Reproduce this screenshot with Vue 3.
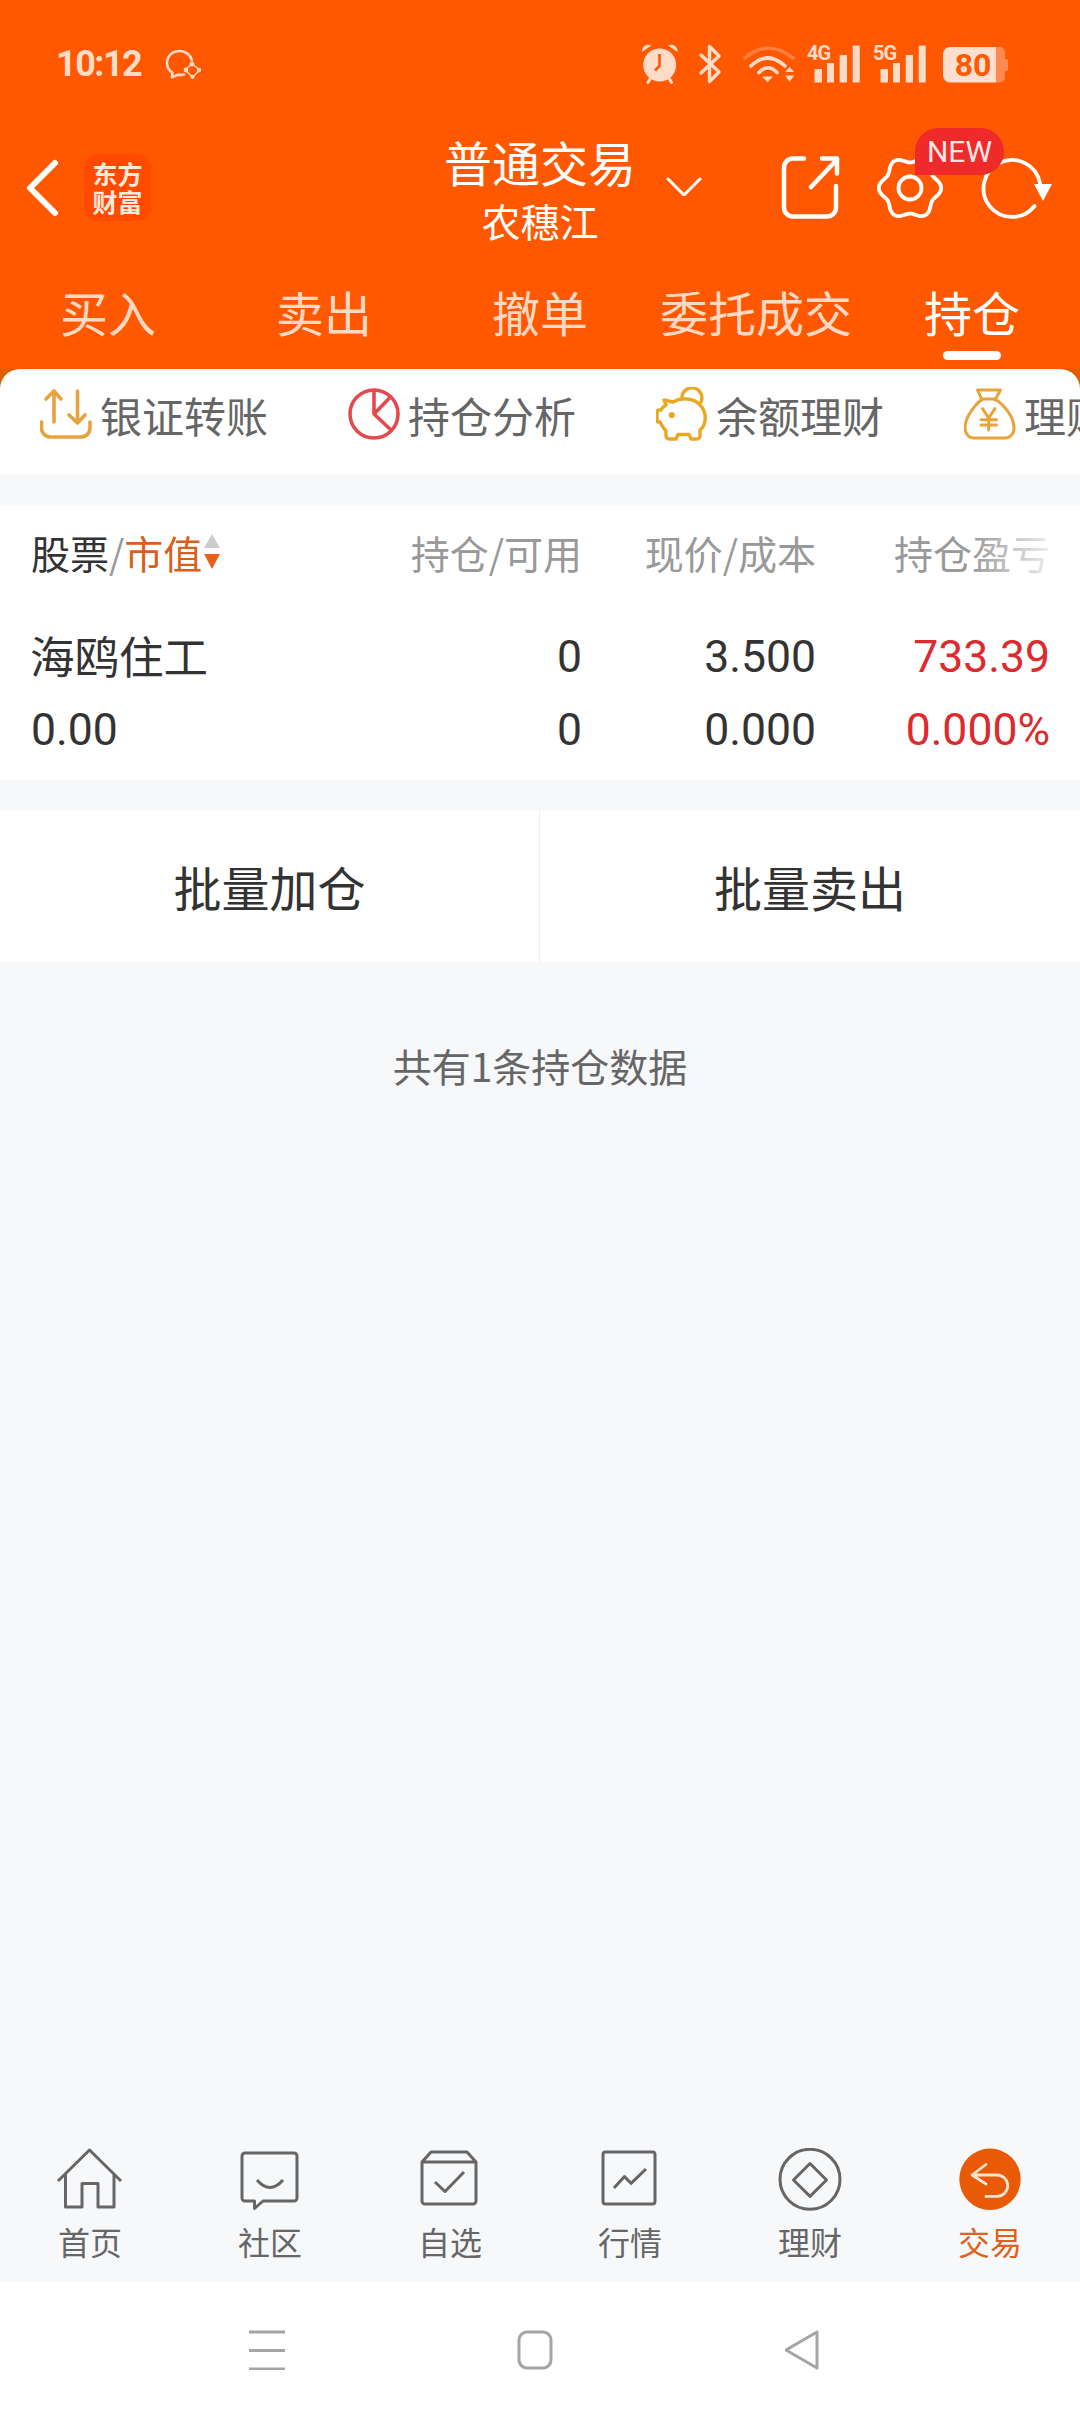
<template>
  <div class="page">
    <header class="header">
      <div class="status">
        <span class="time">10:12</span>
        <svg class="wechat" width="36" height="30" viewBox="0 0 36 30" fill="none" stroke="#ffdcc8" stroke-width="2.6">
          <path d="M19 25.5c-2 .4-4 .5-6 .2l-6 2.5.4-4.600C4 21.500 2 18 2 14 2 7 7.500 2 14.500 2 20.500 2 25.500 6 26.800 11" stroke-linejoin="round" stroke-linecap="round" />
          <path d="M27 15l8 6-7.500 7-7.500-7z" stroke-width="1.400" />
          <g fill="#ffdcc8" stroke="none">
            <circle cx="27" cy="15" r="2.400" />
            <circle cx="34" cy="21" r="2.200" />
            <circle cx="27.500" cy="28" r="2" />
            <circle cx="21" cy="21" r="2.400" />
          </g>
        </svg>
        <svg class="status-icons" width="370" height="44" viewBox="0 0 370 44">
          <g fill="#ffdcc8">
            <circle cx="19.700" cy="23" r="16.500" />
            <path d="M2 10C2 4 7 1.500 11.500 3.500zM37.500 10c0-6-5-8.500-9.500-6.500z" />
          </g>
          <path d="M19.500 12v12l-4.500 4.500" fill="none" stroke="#ff5800" stroke-width="2.600" />
          <path d="M10 37l-2 3.500M29.500 37l2 3.500" stroke="#ffdcc8" stroke-width="3" stroke-linecap="round" />
          <path d="M61 13l18 17-9.500 9.500V4.500L79 14 61 31" fill="none" stroke="#ffdcc8" stroke-width="3.400" stroke-linejoin="round" stroke-linecap="round" />

          <path d="M105 16Q127.600-4 153 16" fill="none" stroke="#ff8040" stroke-width="3.600" stroke-linecap="round" />
          <path d="M111 24Q127.600 8 145 24M119 30.500Q127.600 21 137 30.500" fill="none" stroke="#ffdcc8" stroke-width="3.600" stroke-linecap="round" />
          <path d="M122 34.600h11l-5.500 5.600zM149.600 25l4.600 5h-9.200zM145 33.600h9.200l-4.600 6.100z" fill="#ffdcc8" />

          <g fill="#ffdcc8">
            <text x="167" y="18" class="net">4G</text>
            <rect x="174.500" y="27" width="7.500" height="13.500" />
            <rect x="187" y="21" width="7" height="19.500" />
            <rect x="199.700" y="13" width="7.300" height="27.500" />
            <rect x="212.700" y="3.600" width="7" height="36.900" />
            <text x="233" y="18" class="net">5G</text>
            <rect x="240.500" y="27" width="7.500" height="13.500" />
            <rect x="253" y="21" width="7" height="19.500" />
            <rect x="265.700" y="13" width="7.300" height="27.500" />
            <rect x="278.700" y="3.600" width="7" height="36.900" />
          </g>
          <path d="M356 5h4a5 5 0 0 1 5 5v25.500a5 5 0 0 1-5 5h-4z" fill="#ff8a50" />
          <path d="M365 17h1.500a1.500 1.500 0 0 1 1.500 1.500v9a1.500 1.500 0 0 1-1.500 1.500H365z" fill="#ff8a50" />
          <path d="M310 5h46v35.500h-46a7 7 0 0 1-7-7V12a7 7 0 0 1 7-7z" fill="#ffe0cf" />
          <text x="333" y="34" text-anchor="middle" class="batt">80</text>
        </svg>
      </div>

      <div class="navbar">
        <div class="nav-left">
          <svg width="38" height="64" viewBox="0 0 38 64" fill="none" stroke="#fff" stroke-width="6" stroke-linecap="round" stroke-linejoin="round">
            <path d="M30 7L5 32l25 25" />
          </svg>
          <div class="logo">东方财富</div>
        </div>
        <div class="nav-title">
          <div class="title">普通交易</div>
          <div class="subtitle">农穗江</div>
        </div>
        <div class="nav-right">
          <svg class="chevron" width="36" height="20" viewBox="0 0 36 20" fill="none" stroke="#fff" stroke-width="3">
            <path d="M1 2l17 17L35 2" />
          </svg>
          <svg class="share" width="59" height="64" viewBox="0 0 59 64" fill="none" stroke="#fff" stroke-width="4.500" stroke-linecap="round" stroke-linejoin="round">
            <path d="M23 2.500H12a9 9 0 0 0-9 9v40a9 9 0 0 0 9 9h34a9 9 0 0 0 9-9V30" />
            <path d="M30 31L56 3.500M41 2.500h15v15" />
          </svg>
          <div class="gear">
            <svg width="66" height="66" viewBox="0 0 66 66" fill="none" stroke="#fff" stroke-width="3.800">
              <path :d="gearPath" stroke-linejoin="round" />
              <circle cx="33" cy="33" r="11.500" />
            </svg>
            <span class="badge">NEW</span>
          </div>
          <svg class="refresh" width="74" height="66" viewBox="0 0 74 66" fill="none">
            <path d="M54.500 51A28.500 28.500 0 1 1 60 28" stroke="#fff" stroke-width="3.800" stroke-linecap="round" />
            <path d="M54 29h18l-9 17z" fill="#fff" />
          </svg>
        </div>
      </div>

      <nav class="tabs">
        <div v-for="tab in tabs" :key="tab" class="tab" :class="{ active: tab === '持仓' }">{{ tab }}</div>
      </nav>
    </header>

    <div class="tools-wrap">
      <div class="tools">
        <div class="tool">
          <svg width="52" height="52" viewBox="0 0 52 52" fill="none" stroke="#e8a33f" stroke-width="3.600" stroke-linecap="round" stroke-linejoin="round">
            <path d="M1.500 34v6a9 9 0 0 0 9 9H41a9 9 0 0 0 9-9v-6" />
            <path d="M14 34V3M6 11l8-8 7 8M37.500 3v32M29 27l8.500 8 7.500-8" />
          </svg>
          <span>银证转账</span>
        </div>
        <div class="tool">
          <svg width="52" height="52" viewBox="0 0 52 52" fill="none" stroke="#e5484d" stroke-width="3.600" stroke-linejoin="round">
            <circle cx="26" cy="26" r="24" />
            <path d="M26 3v23L41.500 10M26 26l17 16" />
          </svg>
          <span>持仓分析</span>
        </div>
        <div class="tool">
          <svg width="52" height="54" viewBox="0 0 52 54" fill="none" stroke="#e9a820" stroke-width="3.400" stroke-linejoin="round" stroke-linecap="round">
            <path d="M8 13l9 2c8-5 21-4 27 3 7 7 7 19 0 25v6a3 3 0 0 1-3 3h-6l-2-4.500H22L20 52h-7a3 3 0 0 1-3-3v-5c-3-3-5-7-6-9H2.500A1.500 1.500 0 0 1 1 33.500V25a2 2 0 0 1 2-2h2c1-2 3-4 5-5z" />
            <path d="M26 9.500A10 10 0 1 1 45 15" />
            <circle cx="15.700" cy="28" r="1.400" fill="#e9a820" />
          </svg>
          <span>余额理财</span>
        </div>
        <div class="tool">
          <svg width="52" height="52" viewBox="0 0 52 52" fill="none" stroke="#e9a33a" stroke-width="3" stroke-linejoin="round" stroke-linecap="round">
            <path d="M18 12L13.500 2h23L31 12" />
            <path d="M18 11h13c8 5 19 17 19 29 0 6-4 10-9 10H10c-5 0-9-4-9-10 0-12 11-24 17-29z" />
            <path d="M18.500 20.700L24.700 30l6.300-9.300M17 31.700h15.500M17 37h15.500M24.700 30v12" />
          </svg>
          <span>理财</span>
        </div>
      </div>
    </div>

    <main class="main">
      <section class="table">
        <div class="row head">
          <div class="c-name">股票<i>/</i><em>市值</em>
            <svg width="18" height="36" viewBox="0 0 18 36">
              <path d="M9 0l8 14H1z" fill="#ccc" />
              <path d="M1 20h16l-8 15z" fill="#e8601a" />
            </svg>
          </div>
          <div>持仓/可用</div>
          <div>现价/成本</div>
          <div>持仓盈亏</div>
          <div class="fade"></div>
        </div>
        <div class="row">
          <div class="c-name cjk">海鸥住工</div>
          <div>0</div>
          <div>3.500</div>
          <div class="red">733.39</div>
        </div>
        <div class="row">
          <div class="c-name">0.00</div>
          <div>0</div>
          <div>0.000</div>
          <div class="red">0.000%</div>
        </div>
      </section>

      <section class="actions">
        <div class="action">批量加仓</div>
        <div class="action">批量卖出</div>
      </section>

      <p class="summary">共有1条持仓数据</p>
    </main>

    <nav class="bottom">
      <div class="bottom-item">
        <svg class="b-icon" width="70" height="64" viewBox="0 0 70 64">
          <path d="M3 33L34.500 2 66 33M10.500 26v33H27V35.500h16V59h16V26" />
        </svg>
        <span>首页</span>
      </div>
      <div class="bottom-item">
        <svg class="b-icon" width="70" height="64" viewBox="0 0 70 64">
          <path d="M10 5h49a3 3 0 0 1 3 3v42a3 3 0 0 1-3 3H28l-8.500 7.500V53H10a3 3 0 0 1-3-3V8a3 3 0 0 1 3-3z" />
          <path d="M22 32q13 15 26 0" />
        </svg>
        <span>社区</span>
      </div>
      <div class="bottom-item">
        <svg class="b-icon" width="70" height="64" viewBox="0 0 70 64">
          <path d="M7 14l9-10h36l9 10M7 14v39a3 3 0 0 0 3 3h48a3 3 0 0 0 3-3V14z" />
          <path d="M20 34l10 9.500 19-19.500" />
        </svg>
        <span>自选</span>
      </div>
      <div class="bottom-item">
        <svg class="b-icon" width="70" height="64" viewBox="0 0 70 64">
          <rect x="8" y="4" width="52" height="52" rx="2.500" />
          <path d="M19 40l10.500-11.400L36 35.300 51 21" />
        </svg>
        <span>行情</span>
      </div>
      <div class="bottom-item">
        <svg class="b-icon" width="70" height="64" viewBox="0 0 70 64">
          <circle cx="35" cy="31.300" r="30" />
          <path d="M35 15.500L51.500 32 35 48.400 18.500 32z" />
        </svg>
        <span>理财</span>
      </div>
      <div class="bottom-item active">
        <svg width="70" height="64" viewBox="0 0 70 64" fill="none" stroke="#ffe3d0" stroke-width="2.800" stroke-linecap="round" stroke-linejoin="round">
          <circle cx="35" cy="31.300" r="30.700" fill="#e85a05" stroke="none" />
          <path d="M31 16.500L17 27l14 9M17 27h25a10.700 10.700 0 0 1 0 21.400H31" />
        </svg>
        <span>交易</span>
      </div>
    </nav>

    <div class="sysbar">
      <svg width="36" height="40" viewBox="0 0 36 40" stroke="#a5a5a5" stroke-width="3.200">
        <path d="M0 2h36M0 20.500h36M0 39h36" />
      </svg>
      <svg width="36" height="40" viewBox="0 0 36 40" fill="none" stroke="#a5a5a5" stroke-width="3">
        <rect x="2" y="2" width="32" height="36" rx="8" />
      </svg>
      <svg width="36" height="40" viewBox="0 0 36 40" fill="none" stroke="#a5a5a5" stroke-width="3" stroke-linejoin="round">
        <path d="M1 20L32 2v36z" />
      </svg>
    </div>
  </div>
</template>

<script setup>
const tabs = ['买入', '卖出', '撤单', '委托成交', '持仓']

// scalloped gear outline, six shallow lobes
const points = []
for (let i = 0; i < 144; i++) {
  const a = (i / 144) * Math.PI * 2
  const r = 28.4 + 2.8 * Math.cos(6 * a)
  points.push(`${(33 + r * Math.cos(a)).toFixed(2)} ${(33 + r * Math.sin(a)).toFixed(2)}`)
}
const gearPath = `M${points.join('L')}Z`
</script>

<style>
html,
body {
  margin: 0;
  background: #fff;
}
</style>

<style scoped>
.page {
  width: 1080px;
  height: 2414px;
  display: flex;
  flex-direction: column;
  overflow: hidden;
  background: #f7f8fa;
  font-family: "Noto Sans CJK SC", "Noto Sans", sans-serif;
  color: #333;
}

.header {
  flex: none;
  height: 369px;
  background: #ff5800;
  color: #fff;
}

.status {
  height: 128px;
  display: flex;
  align-items: center;
  padding-left: 56px;
  box-sizing: border-box;
}

.time {
  font-family: Roboto, sans-serif;
  font-weight: 700;
  font-size: 36px;
  letter-spacing: -1.5px;
  color: #ffdcc8;
  width: 109px;
}

.status-icons {
  margin-left: 439px;
}

.net {
  font-family: Roboto, sans-serif;
  font-weight: 700;
  font-size: 20px;
  letter-spacing: -1px;
}

.batt {
  font-family: Roboto, sans-serif;
  font-weight: 700;
  font-size: 32px;
  fill: #ff5800;
}

.navbar {
  height: 119px;
  display: grid;
  grid-template-columns: 1fr 192px 1fr;
  align-items: center;
}

.nav-left {
  display: flex;
  align-items: center;
  padding-left: 25px;
}

.logo {
  margin-left: 21px;
  width: 67px;
  height: 67px;
  box-sizing: border-box;
  padding: 5px 8px 0;
  border-radius: 14px;
  background: #ff4a00;
  text-align: center;
  font-size: 25px;
  font-weight: 700;
  line-height: 28px;
  color: #ffe9dc;
}

.nav-title {
  text-align: center;
  white-space: nowrap;
}

.title {
  font-size: 48px;
  line-height: 60px;
}

.subtitle {
  font-size: 39px;
  line-height: 50px;
  margin-top: 4px;
}

.nav-right {
  display: flex;
  align-items: center;
}

.chevron {
  margin-left: 30px;
  margin-top: -4px;
}

.share {
  margin-left: 79px;
}

.gear {
  position: relative;
  margin-left: 37px;
  width: 66px;
  height: 66px;
}

.badge {
  position: absolute;
  left: 38px;
  top: -27px;
  width: 89px;
  height: 47px;
  border-radius: 24px 24px 24px 0;
  background: #ee2a2a;
  color: #ffe6e6;
  font-family: Roboto, sans-serif;
  font-size: 30px;
  line-height: 47px;
  text-align: center;
}

.refresh {
  margin-left: 37px;
}

.tabs {
  height: 122px;
  display: grid;
  grid-template-columns: repeat(5, 216px);
}

.tab {
  position: relative;
  box-sizing: border-box;
  padding-top: 32px;
  text-align: center;
  font-size: 48px;
  line-height: 64px;
  color: #ffd9c4;
}

.tab.active {
  color: #fff;
}

.tab.active::after {
  content: "";
  position: absolute;
  left: 79px;
  bottom: 9px;
  width: 58px;
  height: 9px;
  border-radius: 5px;
  background: #fff;
}

.tools-wrap {
  flex: none;
  background: #dd5c00;
}

.tools {
  height: 106px;
  display: flex;
  align-items: center;
  padding: 0 0 16px 40px;
  box-sizing: border-box;
  gap: 80px;
  overflow: hidden;
  border-radius: 20px 20px 0 0;
  background: #fff;
  font-size: 42px;
  color: #666;
  white-space: nowrap;
}

.tool {
  flex: none;
  display: flex;
  align-items: center;
  gap: 8px;
}

.main {
  flex: 1;
  padding-top: 30px;
}

.table {
  background: #fff;
  padding-bottom: 14px;
}

.row {
  position: relative;
  display: grid;
  grid-template-columns: 1fr 234px 234px 234px;
  align-items: center;
  height: 73px;
  padding: 0 30px 0 31px;
  text-align: right;
  font-family: Roboto, "Noto Sans CJK SC", sans-serif;
  font-size: 44.5px;
  color: #333;
}

.c-name {
  text-align: left;
}

.cjk {
  margin-left: -1px;
  margin-bottom: 5px;
}

.head {
  height: 115px;
  font-family: "Noto Sans CJK SC", sans-serif;
  font-size: 39px;
  color: #999;
  padding-bottom: 22px;
  box-sizing: border-box;
}

.head .c-name {
  display: flex;
  align-items: center;
  color: #333;
}

.head i {
  font-style: normal;
  color: #999;
}

.head em {
  font-style: normal;
  color: #d9601a;
}

.head svg {
  margin-left: 1px;
}

.fade {
  position: absolute;
  top: 0;
  right: 0;
  bottom: 0;
  width: 110px;
  background: linear-gradient(90deg, rgba(255, 255, 255, 0), #fff 90%);
}

.row .red {
  color: #dc2a2e;
}

.actions {
  margin-top: 31px;
  height: 151px;
  display: grid;
  grid-template-columns: 539px 1fr;
  background: #fff;
}

.action {
  text-align: center;
  font-size: 48px;
  line-height: 151px;
}

.action + .action {
  border-left: 1px solid #eeeeee;
}

.summary {
  margin: 0;
  padding-top: 73px;
  text-align: center;
  font-size: 39px;
  line-height: 60px;
  color: #666;
}

.bottom {
  flex: none;
  height: 162px;
  display: grid;
  grid-template-columns: repeat(6, 180px);
  box-sizing: border-box;
  padding-top: 28px;
}

.bottom-item {
  display: flex;
  flex-direction: column;
  align-items: center;
  font-size: 32px;
  line-height: 44px;
  color: #666;
}

.bottom-item span {
  margin-top: 7px;
}

.bottom-item.active {
  color: #e0611e;
}

.b-icon {
  fill: none;
  stroke: #666;
  stroke-width: 3;
  stroke-linejoin: round;
}

.sysbar {
  flex: none;
  height: 132px;
  background: #fff;
  display: flex;
  gap: 232px;
  align-items: flex-start;
  padding: 48px 0 0 249px;
  box-sizing: border-box;
}
</style>
